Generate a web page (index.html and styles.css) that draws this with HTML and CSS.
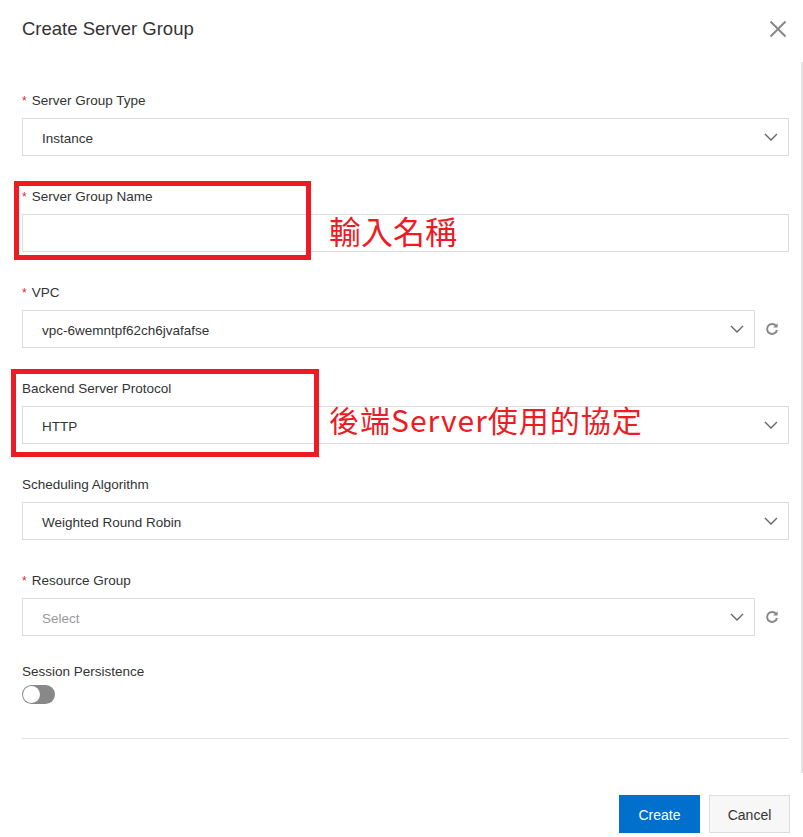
FILE: index.html
```html
<!DOCTYPE html>
<html>
<head>
<meta charset="utf-8">
<link rel="stylesheet" href="styles.css">
</head>
<body>
<div class="dialog">
  <div class="header">
    <div class="title">Create Server Group</div>
    <svg class="close" width="18" height="18" viewBox="0 0 18 18"><path d="M1.5 1.5 L16.5 16.5 M16.5 1.5 L1.5 16.5" stroke="#888" stroke-width="2" fill="none"/></svg>
  </div>
  <div class="form">
    <div class="field">
      <div class="label"><span class="req">*</span>Server Group Type</div>
      <div class="row">
        <div class="box"><span class="val">Instance</span>
          <svg class="chev" width="14" height="8" viewBox="0 0 14 8"><path d="M1 1 L7 7 L13 1" stroke="#666" stroke-width="1.4" fill="none"/></svg>
        </div>
      </div>
    </div>
    <div class="field">
      <div class="label"><span class="req">*</span>Server Group Name</div>
      <div class="row"><div class="box"></div></div>
    </div>
    <div class="field">
      <div class="label"><span class="req">*</span>VPC</div>
      <div class="row">
        <div class="box"><span class="val">vpc-6wemntpf62ch6jvafafse</span>
          <svg class="chev" width="14" height="8" viewBox="0 0 14 8"><path d="M1 1 L7 7 L13 1" stroke="#666" stroke-width="1.4" fill="none"/></svg>
        </div>
        <div class="refresh">
          <svg width="14" height="14" viewBox="0 0 14 14"><path d="M11.3 4.2 A5 5 0 1 0 12 8" stroke="#888" stroke-width="2" fill="none"/><path d="M12.6 1.2 L12.6 5.6 L8.2 5.6 Z" fill="#888"/></svg>
        </div>
      </div>
    </div>
    <div class="field">
      <div class="label">Backend Server Protocol</div>
      <div class="row">
        <div class="box"><span class="val">HTTP</span>
          <svg class="chev" width="14" height="8" viewBox="0 0 14 8"><path d="M1 1 L7 7 L13 1" stroke="#666" stroke-width="1.4" fill="none"/></svg>
        </div>
      </div>
    </div>
    <div class="field">
      <div class="label">Scheduling Algorithm</div>
      <div class="row">
        <div class="box"><span class="val">Weighted Round Robin</span>
          <svg class="chev" width="14" height="8" viewBox="0 0 14 8"><path d="M1 1 L7 7 L13 1" stroke="#666" stroke-width="1.4" fill="none"/></svg>
        </div>
      </div>
    </div>
    <div class="field last">
      <div class="label"><span class="req">*</span>Resource Group</div>
      <div class="row">
        <div class="box"><span class="val ph">Select</span>
          <svg class="chev" width="14" height="8" viewBox="0 0 14 8"><path d="M1 1 L7 7 L13 1" stroke="#666" stroke-width="1.4" fill="none"/></svg>
        </div>
        <div class="refresh">
          <svg width="14" height="14" viewBox="0 0 14 14"><path d="M11.3 4.2 A5 5 0 1 0 12 8" stroke="#888" stroke-width="2" fill="none"/><path d="M12.6 1.2 L12.6 5.6 L8.2 5.6 Z" fill="#888"/></svg>
        </div>
      </div>
    </div>
    <div class="session">
      <div class="label">Session Persistence</div>
      <div class="toggle"><div class="knob"></div></div>
    </div>
    <div class="divider"></div>
    <div class="footer">
      <button class="btn primary">Create</button>
      <button class="btn">Cancel</button>
    </div>
  </div>
  <div class="scrolltrack"></div>
  <div class="mark mark1"></div>
  <div class="mark mark2"></div>
  <div class="note note1">輸入名稱</div>
  <div class="note note2">後端Server使用的協定</div>
</div>
</body>
</html>
```
FILE: styles.css
```css
html, body {
  margin: 0;
  padding: 0;
  background: #fff;
}
body {
  font-family: "Liberation Sans", Arial, sans-serif;
  color: #333;
  font-size: 13.5px;
}
.dialog {
  position: relative;
  width: 803px;
  height: 837px;
  overflow: hidden;
}
.header {
  height: 58px;
  display: flex;
  align-items: center;
  justify-content: space-between;
  padding: 0 16px 0 22px;
}
.title {
  font-size: 18.5px;
  color: #333;
}
.close {
  display: block;
}
.form {
  padding: 33px 14px 0 22px;
}
.field {
  margin-bottom: 31px;
}
.field.last {
  margin-bottom: 26px;
}
.label {
  height: 17px;
  padding-top: 1px;
  line-height: 18px;
  font-size: 13.5px;
  color: #333;
  margin-bottom: 9px;
}
.req {
  color: #e8212b;
  font-size: 12px;
  margin-right: 5px;
}
.row {
  display: flex;
}
.box {
  flex: 1;
  height: 38px;
  box-sizing: border-box;
  border: 1px solid #dcdcdc;
  display: flex;
  align-items: center;
  justify-content: space-between;
  padding: 0 10px 0 19px;
}
.val {
  font-size: 13.5px;
  color: #333;
  padding-top: 2px;
}
.val.ph {
  color: #999;
}
.chev {
  display: block;
}
.refresh {
  width: 34px;
  display: flex;
  align-items: center;
  justify-content: center;
}
.refresh svg {
  display: block;
}
.session .label {
  margin-bottom: 5px;
}
.toggle {
  width: 33px;
  height: 19px;
  border-radius: 10px;
  background: #888;
  position: relative;
}
.knob {
  position: absolute;
  left: 1px;
  top: 1px;
  width: 17px;
  height: 17px;
  border-radius: 50%;
  background: #fff;
}
.divider {
  margin-top: 34px;
  height: 1px;
  background: #e3e3e3;
}
.footer {
  margin-top: 56px;
  margin-right: -1px;
  display: flex;
  justify-content: flex-end;
  gap: 9px;
}
.btn {
  width: 81px;
  height: 38px;
  box-sizing: border-box;
  border: 1px solid #ddd;
  background: #f7f7f7;
  color: #333;
  font-family: "Liberation Sans", Arial, sans-serif;
  font-size: 14px;
  padding: 1px 0 0;
}
.btn.primary {
  background: #0070cc;
  border-color: #0070cc;
  color: #fff;
}
.scrolltrack {
  position: absolute;
  left: 801px;
  top: 62px;
  width: 2px;
  height: 711px;
  background: #e4e4e4;
}
.mark {
  position: absolute;
  box-sizing: border-box;
  border: 5px solid #ed1c24;
}
.mark1 {
  left: 14px;
  top: 181px;
  width: 297px;
  height: 79px;
}
.mark2 {
  left: 11px;
  top: 369px;
  width: 308px;
  height: 88px;
}
.note {
  position: absolute;
  color: #ed1c24;
  font-family: "Noto Sans CJK TC", "Noto Sans CJK SC", sans-serif;
  white-space: nowrap;
}
.note1 {
  left: 329px;
  top: 212px;
  font-size: 32px;
  line-height: 36px;
}
.note2 {
  left: 329px;
  top: 401px;
  font-size: 30px;
  line-height: 36px;
  letter-spacing: 1px;
}
```
